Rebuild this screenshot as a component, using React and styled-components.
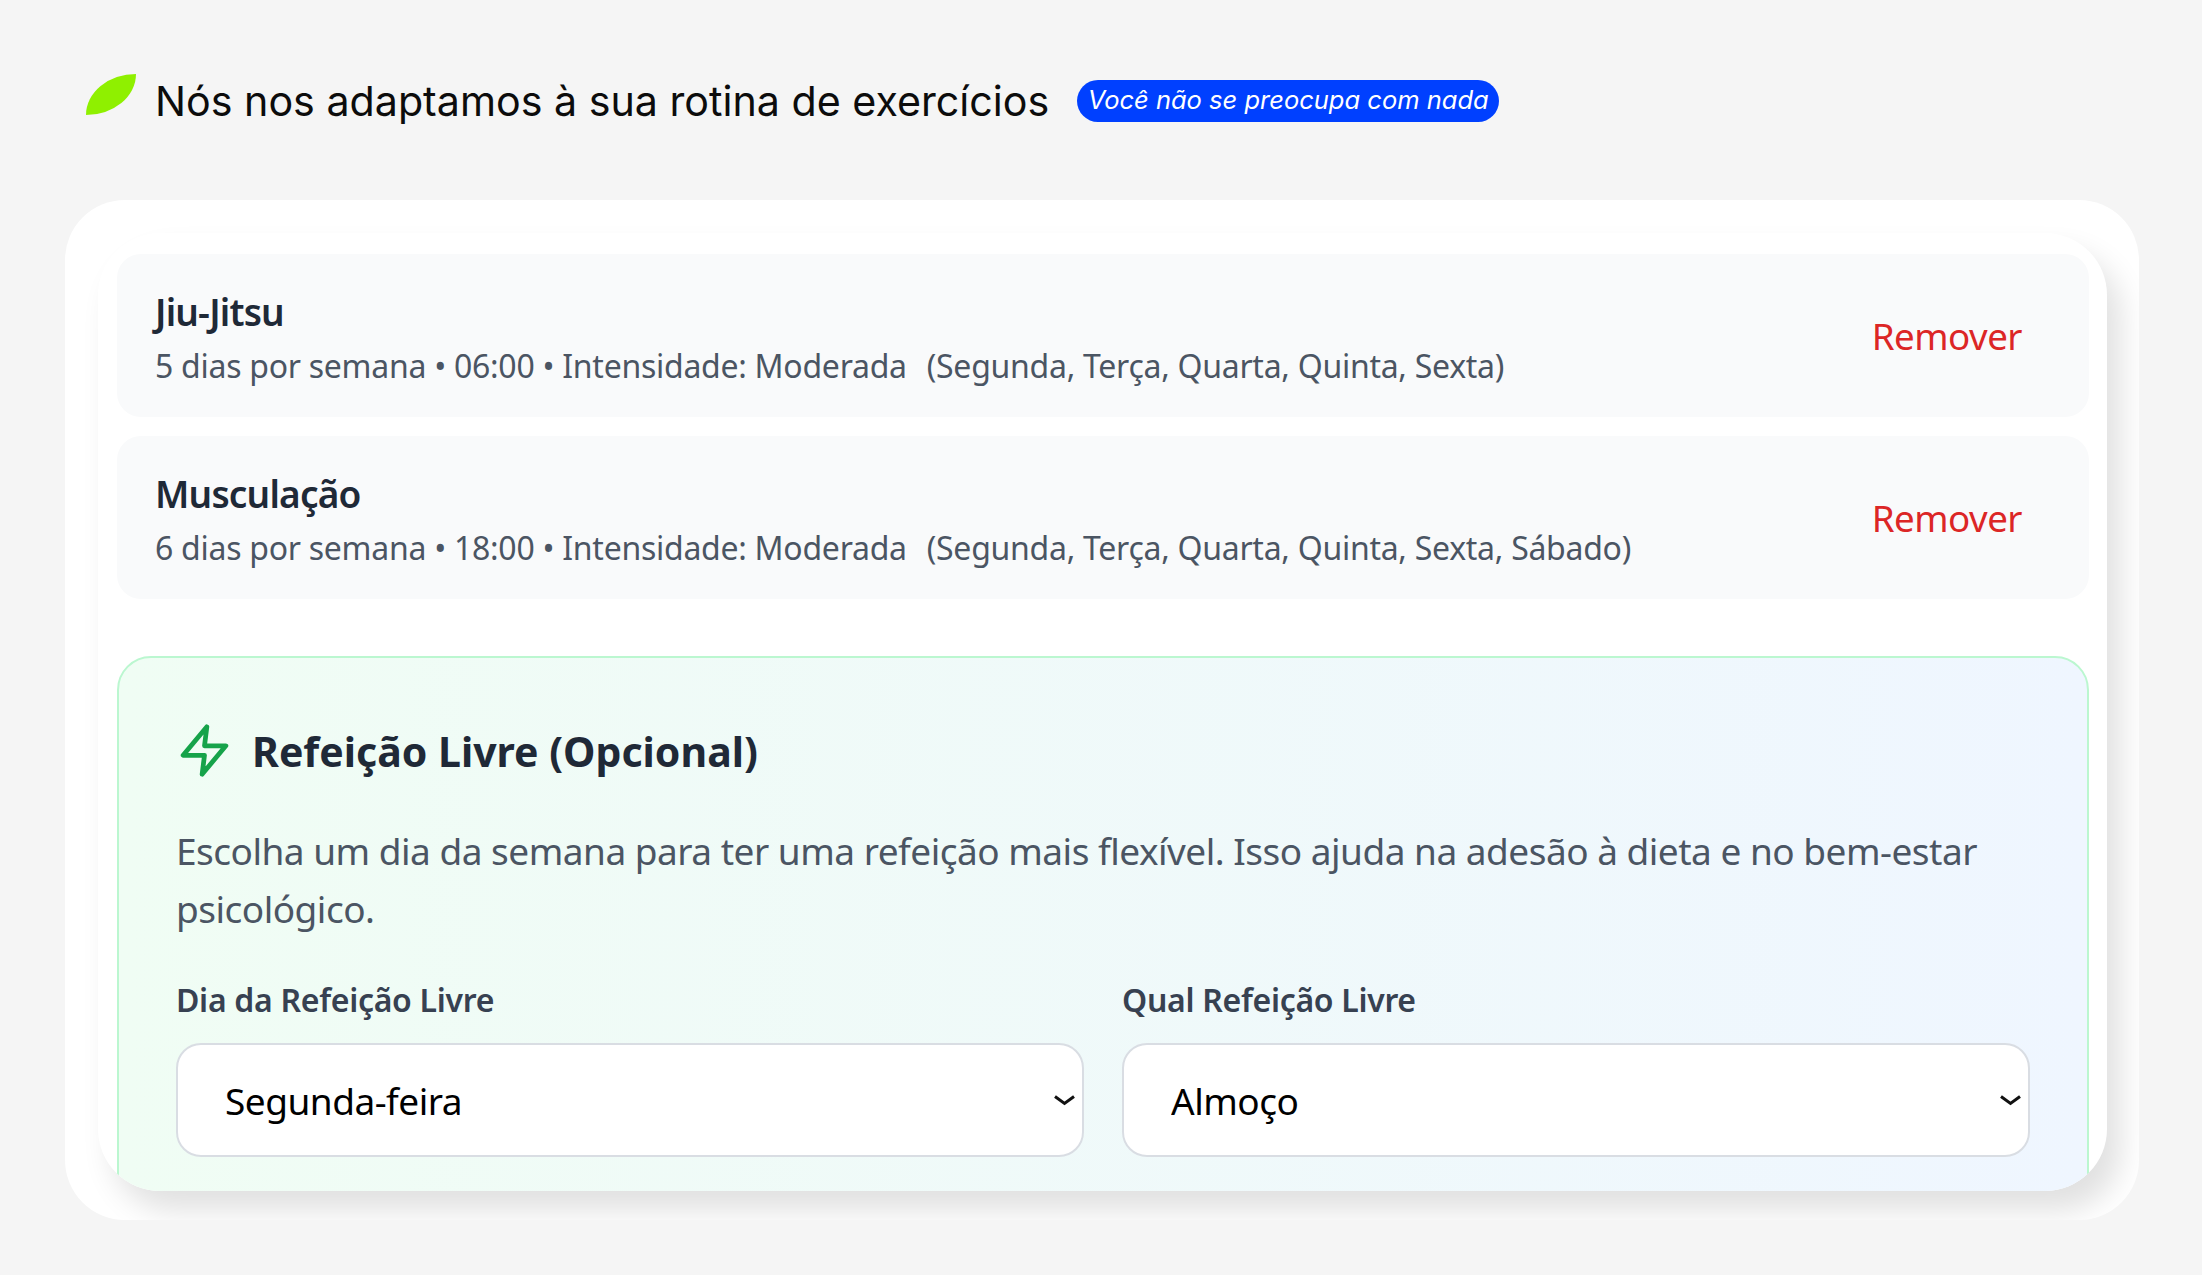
import React from "react";
import styled, { createGlobalStyle } from "styled-components";

const ROWS = [
  {
    name: "Jiu-Jitsu",
    info: "5 dias por semana • 06:00 • Intensidade: Moderada",
    days: "(Segunda, Terça, Quarta, Quinta, Sexta)",
  },
  {
    name: "Musculação",
    info: "6 dias por semana • 18:00 • Intensidade: Moderada",
    days: "(Segunda, Terça, Quarta, Quinta, Sexta, Sábado)",
  },
];

function Chevron() {
  return (
    <ChevronIcon viewBox="0 0 21 11" width="21" height="11">
      <path d="M1 1.5 L10.5 8.5 L20 1.5" fill="none" stroke="#111" strokeWidth="3" />
    </ChevronIcon>
  );
}

function Bolt() {
  return (
    <svg viewBox="0 0 24 24" width="57" height="57" fill="none" stroke="#16a34a" strokeWidth="2" strokeLinejoin="round">
      <polygon points="13 2 3 14 12 14 11 22 21 10 12 10 13 2" />
    </svg>
  );
}

function App() {
  return (
    <Page>
      <GlobalStyle />
      <Header>
        <Leaf />
        <Title>Nós nos adaptamos à sua rotina de exercícios</Title>
        <Badge>Você não se preocupa com nada</Badge>
      </Header>
      <OuterCard>
        <InnerCard>
          <Rows>
            {ROWS.map((row) => (
              <Row key={row.name}>
                <RowText>
                  <RowName>{row.name}</RowName>
                  <RowInfo>
                    {row.info}
                    <Days>{row.days}</Days>
                  </RowInfo>
                </RowText>
                <RemoveBtn>Remover</RemoveBtn>
              </Row>
            ))}
          </Rows>
          <FreeMeal>
            <FreeHead>
              <Bolt />
              <FreeTitle>Refeição Livre (Opcional)</FreeTitle>
            </FreeHead>
            <FreeText>
              Escolha um dia da semana para ter uma refeição mais flexível. Isso ajuda na adesão à
              dieta e no bem-estar psicológico.
            </FreeText>
            <Fields>
              <div>
                <FieldLabel>Dia da Refeição Livre</FieldLabel>
                <SelectWrap>
                  <Select defaultValue="Segunda-feira">
                    <option>Segunda-feira</option>
                    <option>Terça-feira</option>
                  </Select>
                  <Chevron />
                </SelectWrap>
              </div>
              <div>
                <FieldLabel>Qual Refeição Livre</FieldLabel>
                <SelectWrap>
                  <Select defaultValue="Almoço">
                    <option>Almoço</option>
                    <option>Jantar</option>
                  </Select>
                  <Chevron />
                </SelectWrap>
              </div>
            </Fields>
          </FreeMeal>
        </InnerCard>
      </OuterCard>
    </Page>
  );
}

export default App;

const GlobalStyle = createGlobalStyle`
  html, body {
    margin: 0;
    background: #fff;
  }
  * {
    box-sizing: border-box;
  }
`;

const Page = styled.div`
  width: 2202px;
  height: 1275px;
  padding: 74px 0 0 65px;
  background: #f5f5f5;
  overflow: hidden;
  font-family: "Noto Sans", "Open Sans", sans-serif;
`;

const Header = styled.div`
  display: flex;
  height: 54px;
  padding-left: 21px;
  margin-bottom: 72px;
`;

const Leaf = styled.div`
  width: 50px;
  height: 41px;
  background: #8ff000;
  border-radius: 100% 0;
`;

const Title = styled.h1`
  margin: 2px 0 0 19px;
  font-family: Inter, sans-serif;
  font-size: 41.2px;
  font-weight: 400;
  line-height: 50px;
  color: #0c0c0c;
  white-space: nowrap;
`;

const Badge = styled.span`
  margin: 6px 0 0 28px;
  width: 422px;
  height: 42px;
  border-radius: 21px;
  background: #0040ff;
  color: #fff;
  font-family: Inter, sans-serif;
  font-size: 25.5px;
  font-style: italic;
  line-height: 40px;
  text-align: center;
  white-space: nowrap;
`;

const OuterCard = styled.div`
  width: 2074px;
  height: 1020px;
  padding: 33px 32px 29px 33px;
  background: #fff;
  border-radius: 60px;
  overflow: hidden;
`;

const InnerCard = styled.div`
  height: 958px;
  padding: 21px 18px 0 19px;
  background: #fff;
  border-radius: 62px;
  overflow: hidden;
  box-shadow: 14px 20px 30px rgba(0, 0, 0, 0.12);
`;

const Rows = styled.div`
  display: flex;
  flex-direction: column;
  gap: 19px;
  margin-bottom: 57px;
`;

const Row = styled.div`
  display: flex;
  justify-content: space-between;
  align-items: center;
  height: 163px;
  padding: 0 67px 0 38px;
  background: #f9fafb;
  border-radius: 24px;
`;

const RowText = styled.div`
  padding-top: 9px;
`;

const RowName = styled.div`
  font-size: 37px;
  font-weight: 600;
  line-height: 50px;
  color: #1f2937;
  letter-spacing: -0.8px;
`;

const RowInfo = styled.div`
  font-size: 32px;
  line-height: 57px;
  color: #4b5563;
  letter-spacing: -0.27px;
  white-space: nowrap;
`;

const Days = styled.span`
  margin-left: 20px;
`;

const RemoveBtn = styled.button`
  padding: 0;
  border: none;
  background: none;
  font-family: inherit;
  font-size: 36.7px;
  letter-spacing: -0.5px;
  color: #dc2626;
`;

const FreeMeal = styled.div`
  padding: 63px 57px 59px;
  border: 2px solid #bbf7d0;
  border-radius: 34px;
  background: linear-gradient(90deg, #f0fdf4, #eff6ff);
`;

const FreeHead = styled.div`
  display: flex;
  align-items: center;
  gap: 19px;
  margin-bottom: 42px;
`;

const FreeTitle = styled.h3`
  margin: 1px 0 0;
  font-size: 41px;
  font-weight: 700;
  line-height: 58px;
  color: #1f2937;
`;

const FreeText = styled.p`
  margin: 0 0 42px;
  font-size: 37px;
  line-height: 57.5px;
  letter-spacing: -0.5px;
  color: #4b5563;
`;

const Fields = styled.div`
  display: grid;
  grid-template-columns: 1fr 1fr;
  column-gap: 38px;
`;

const FieldLabel = styled.label`
  display: block;
  margin-bottom: 23px;
  font-size: 32px;
  font-weight: 600;
  line-height: 41px;
  letter-spacing: -0.3px;
  color: #374151;
`;

const SelectWrap = styled.div`
  position: relative;
`;

const Select = styled.select`
  display: block;
  width: 100%;
  height: 114px;
  padding: 0 47px;
  border: 2px solid #d9dde3;
  border-radius: 25px;
  background: #fff;
  appearance: none;
  font-family: inherit;
  font-size: 37px;
  letter-spacing: -0.5px;
  color: #000;
`;

const ChevronIcon = styled.svg`
  position: absolute;
  right: 9px;
  top: 52px;
  pointer-events: none;
`;
